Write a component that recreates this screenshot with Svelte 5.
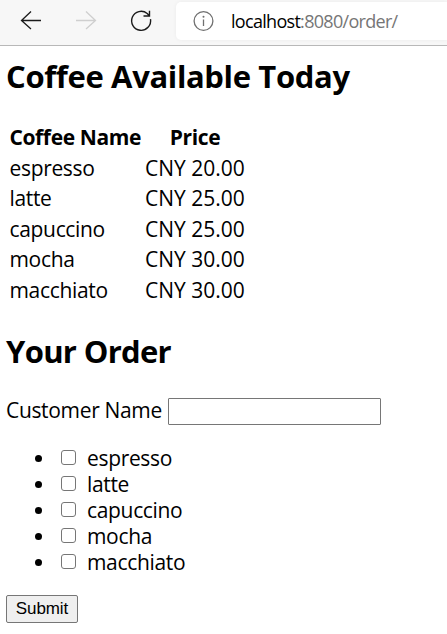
<script>
  const coffees = [
    { name: 'espresso', price: 'CNY 20.00' },
    { name: 'latte', price: 'CNY 25.00' },
    { name: 'capuccino', price: 'CNY 25.00' },
    { name: 'mocha', price: 'CNY 30.00' },
    { name: 'macchiato', price: 'CNY 30.00' }
  ];
</script>

<div class="window">
  <header>
    <svg class="nav" width="176" height="45" viewBox="0 0 176 45" fill="none" stroke-width="1.3">
      <path d="M41 20.5H21.5M31 11.5L21.5 20.5L31 29" stroke="#1b1b1b" />
      <path d="M76 20.5H95.5M86 11.5L95.5 20.5L86 29" stroke="#cfcfcf" />
      <path d="M150.5 19.2A9.5 9.5 0 1 1 147.2 13.5L149.7 16M149.5 10.8V16H143.5" stroke="#1b1b1b" stroke-width="1.4" />
    </svg>
    <div class="address">
      <svg width="22" height="22" viewBox="0 0 22 22" fill="none" stroke="#707070" stroke-width="1.3">
        <circle cx="10.5" cy="11" r="9.4" />
        <path d="M10.5 9.5V16" />
        <circle cx="10.5" cy="6.8" r="1" fill="#707070" stroke="none" />
      </svg>
      <span class="url">localhost<span class="path">:8080/order/</span></span>
    </div>
  </header>
  <main>
    <h2 class="available">Coffee Available Today</h2>
    <table>
      <thead>
        <tr><th>Coffee Name</th><th>Price</th></tr>
      </thead>
      <tbody>
        {#each coffees as coffee}
          <tr><td>{coffee.name}</td><td class="price">{coffee.price}</td></tr>
        {/each}
      </tbody>
    </table>
    <h2 class="order">Your Order</h2>
    <form onsubmit={(e) => e.preventDefault()}>
      <label class="customer"><span>Customer Name</span><input type="text" name="customer" /></label>
      <ul>
        {#each coffees as coffee}
          <li><label><input type="checkbox" value={coffee.name} /><span>{coffee.name}</span></label></li>
        {/each}
      </ul>
      <button type="submit">Submit</button>
    </form>
  </main>
</div>

<style>
  :global(body) { margin: 0; background: #fff; }
  .window {
    width: 447px;
    height: 634px;
    overflow: hidden;
    background: #fff;
    color: #000;
    font: 21px/26px "Open Sans", "Noto Sans", sans-serif;
    letter-spacing: -0.33px;
  }
  header {
    box-sizing: border-box;
    display: flex;
    height: 46px;
    background: #f7f7f7;
    border-bottom: 1px solid #b8b8b8;
  }
  .nav { flex: none; }
  .address {
    box-sizing: border-box;
    display: flex;
    align-items: center;
    flex: 1;
    height: 38px;
    margin-top: 2px;
    padding-left: 17px;
    background: #fff;
    border-radius: 5px 0 0 5px;
    box-shadow: 0 0 4px #0000000d;
  }
  .address svg { flex: none; margin-top: -1px; }
  .url {
    margin: -1px 0 0 16px;
    font-size: 18px;
    line-height: 26px;
    letter-spacing: -0.7px;
    white-space: nowrap;
  }
  .path { color: #767676; }
  main { padding: 0 6px; }
  h2 {
    margin: 0;
    font-size: 31px;
    line-height: 42px;
    white-space: nowrap;
  }
  .available { padding-top: 9px; letter-spacing: -0.36px; }
  table {
    margin-top: 24px;
    border-collapse: separate;
    border-spacing: 3px;
    table-layout: fixed;
    width: 242px;
    line-height: 27px;
  }
  th, td { padding: 0; white-space: nowrap; }
  td:first-child, th:first-child { padding-left: 0.5px; }
  th { padding-bottom: 1px; }
  tbody tr:nth-child(even) td { padding-bottom: 1px; }
  th:first-child { width: 132.5px; text-align: left; letter-spacing: -0.38px; }
  .price { letter-spacing: 0; }
  .order { padding-top: 23px; letter-spacing: -0.68px; }
  .customer { display: flex; align-items: center; margin-top: 25px; height: 28px; }
  .customer span { width: 162px; margin-top: -2px; white-space: nowrap; }
  .customer input {
    box-sizing: border-box;
    width: 213px;
    height: 27px;
    margin: 0;
    border: 1px solid #767676;
    border-radius: 1px;
    background: #fff;
  }
  ul { margin: 20px 0 0; padding: 0; list-style: none; }
  li { display: flex; align-items: center; height: 26px; }
  li::before {
    content: "";
    width: 7px;
    height: 7px;
    margin: 0 19px 0 29px;
    border-radius: 50%;
    background: #000;
  }
  li label { display: flex; align-items: center; }
  li input {
    appearance: none;
    box-sizing: border-box;
    width: 15px;
    height: 15px;
    margin: 0 11px 1px 0;
    border: 1px solid #767676;
    border-radius: 3px;
    background: #fff;
  }
  button {
    display: block;
    box-sizing: border-box;
    width: 72px;
    height: 28px;
    margin: 20px 0 0;
    padding: 0;
    border: 1px solid #767676;
    border-radius: 2px;
    background: #efefef;
    color: #000;
    font: 17px/24px "Liberation Sans", Arial, sans-serif;
    letter-spacing: -0.1px;
  }
</style>
